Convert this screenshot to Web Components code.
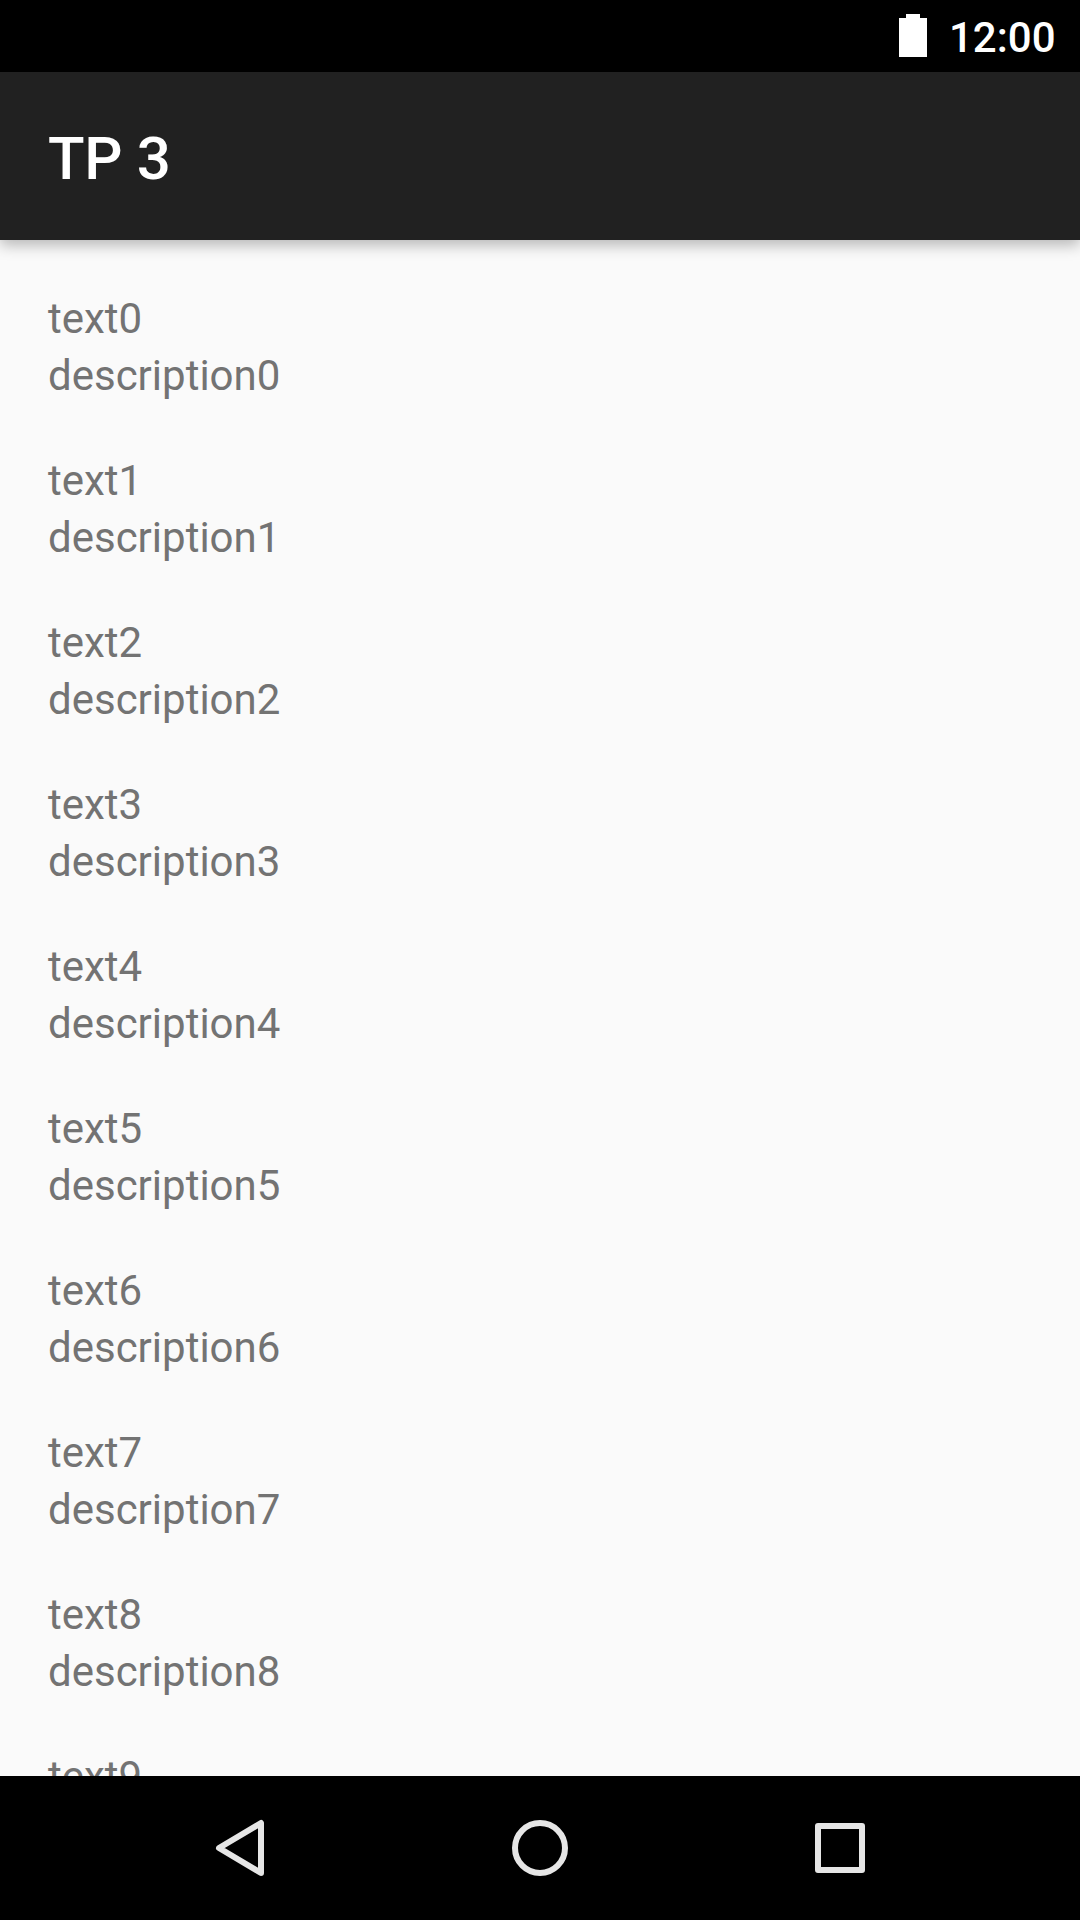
<!DOCTYPE html>
<html lang="en"><head><meta charset="utf-8"><title>TP 3</title>
<style>html,body{margin:0;height:1920px;overflow:hidden}body{font-family:Roboto,sans-serif}</style></head>
<body><phone-screen></phone-screen>
<script>
const define=(name,html,init)=>customElements.define(name,class extends HTMLElement{
 constructor(){super();this.attachShadow({mode:'open'}).innerHTML=html;}
 connectedCallback(){if(init)init(this);}
});
define('status-bar',`<style>:host{display:flex;height:72px;box-sizing:border-box;background:#000;color:#fff;justify-content:flex-end;align-items:flex-start;padding-right:24.5px;gap:22px;font-size:42px;font-weight:500;line-height:72px}svg{display:block;margin-top:14px}span{padding-top:2px}</style>
<svg width="28" height="43" viewBox="0 0 28 43"><path fill="#fff" d="M7 0h14v4h7v39H0V4h7z"/></svg><span>12:00</span>`);
define('app-bar',`<style>:host{display:flex;height:168px;box-sizing:border-box;padding:6px 0 0 48px;align-items:center;background:#212121;color:#fff;font-size:60px;font-weight:500;line-height:70px;letter-spacing:-.3px;position:relative;z-index:1;box-shadow:0 5px 14px rgba(0,0,0,.28)}</style><span><slot></slot></span>`);
define('list-row',`<style>:host{display:flex;flex-direction:column;flex:none;height:162px;box-sizing:border-box;padding:50px 48px 0;font-size:42px;line-height:57px;color:#737373}</style><slot name="title"></slot><slot name="detail"></slot>`);
define('item-list',`<style>:host{display:flex;flex-direction:column;flex:1;min-height:0;overflow:hidden;background:#fafafa}</style>`,el=>{
 for(let i=0;i<10;i++){const r=document.createElement('list-row');r.innerHTML=`<span slot="title">text${i}</span>`+(i<9?`<span slot="detail">description${i}</span>`:'');el.shadowRoot.append(r);}
});
define('nav-bar',`<style>:host{display:flex;height:144px;background:#000;justify-content:center;gap:210px;align-items:center}svg{display:block;fill:none;stroke:#e6e6e6;stroke-width:6;stroke-linejoin:round}</style>
<svg width="90" height="90"><path d="M66 20v50L24 45z"/></svg><svg width="90" height="90"><circle cx="45" cy="45" r="25"/></svg><svg width="90" height="90"><rect x="23" y="23" width="44" height="44"/></svg>`);
define('phone-screen',`<style>:host{display:flex;flex-direction:column;width:1080px;height:1920px;overflow:hidden}</style><status-bar></status-bar><app-bar>TP 3</app-bar><item-list></item-list><nav-bar></nav-bar>`);
</script></body></html>
